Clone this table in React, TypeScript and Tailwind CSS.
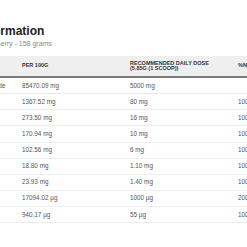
const rows = [
  { name: "Ultrapure Creatine Monohydrate", per100: "85470.09 mg", dose: "5000 mg", nrv: "" },
  { name: "Vitamin C", per100: "1367.52 mg", dose: "80 mg", nrv: "100%" },
  { name: "Niacin", per100: "273.50 mg", dose: "16 mg", nrv: "100%" },
  { name: "Zinc", per100: "170.94 mg", dose: "10 mg", nrv: "100%" },
  { name: "Pantothenic Acid", per100: "102.56 mg", dose: "6 mg", nrv: "100%" },
  { name: "Thiamin", per100: "18.80 mg", dose: "1.10 mg", nrv: "100%" },
  { name: "Riboflavin", per100: "23.93 mg", dose: "1.40 mg", nrv: "100%" },
  { name: "Folic Acid", per100: "17094.02 µg", dose: "1000 µg", nrv: "200%" },
  { name: "Selenium", per100: "940.17 µg", dose: "55 µg", nrv: "100%" },
];

export default function App() {
  return (
    <div className="h-[247px] w-[247px] overflow-hidden bg-white font-['Liberation_Sans',Arial,sans-serif]">
      <div className="ml-[-85px] w-[440px] pt-[25px]">
        <h2 className="whitespace-nowrap text-[12px] font-bold leading-[12px] text-[#222]">Nutritional Information</h2>
        <p className="ml-[33px] mt-[3px] whitespace-nowrap text-[7px] leading-[8px] text-[#8a8a8a]">
          Flavour: Mixed Berry - 158 grams
        </p>

        <div className="mt-[8px]">
          <div className="grid h-[22px] grid-cols-[107px_108px_108px_1fr] items-center border-b-2 border-[#7a7a7a] bg-[#efefef] text-[5.5px] font-bold uppercase leading-[5.5px] text-[#333]">
            <div>Ingredient</div>
            <div>Per 100g</div>
            <div>
              Recommended daily dose
              <br />
              (5.85g (1 scoop))
            </div>
            <div>%NRV</div>
          </div>
          {rows.map((r) => (
            <div
              key={r.name}
              className="grid h-[16.125px] grid-cols-[107px_108px_108px_1fr] items-center border-b border-[#ececec] text-[6.35px] leading-[8px] text-[#555]"
            >
              <div className="whitespace-nowrap">{r.name}</div>
              <div>{r.per100}</div>
              <div>{r.dose}</div>
              <div>{r.nrv}</div>
            </div>
          ))}
        </div>
      </div>
    </div>
  );
}
